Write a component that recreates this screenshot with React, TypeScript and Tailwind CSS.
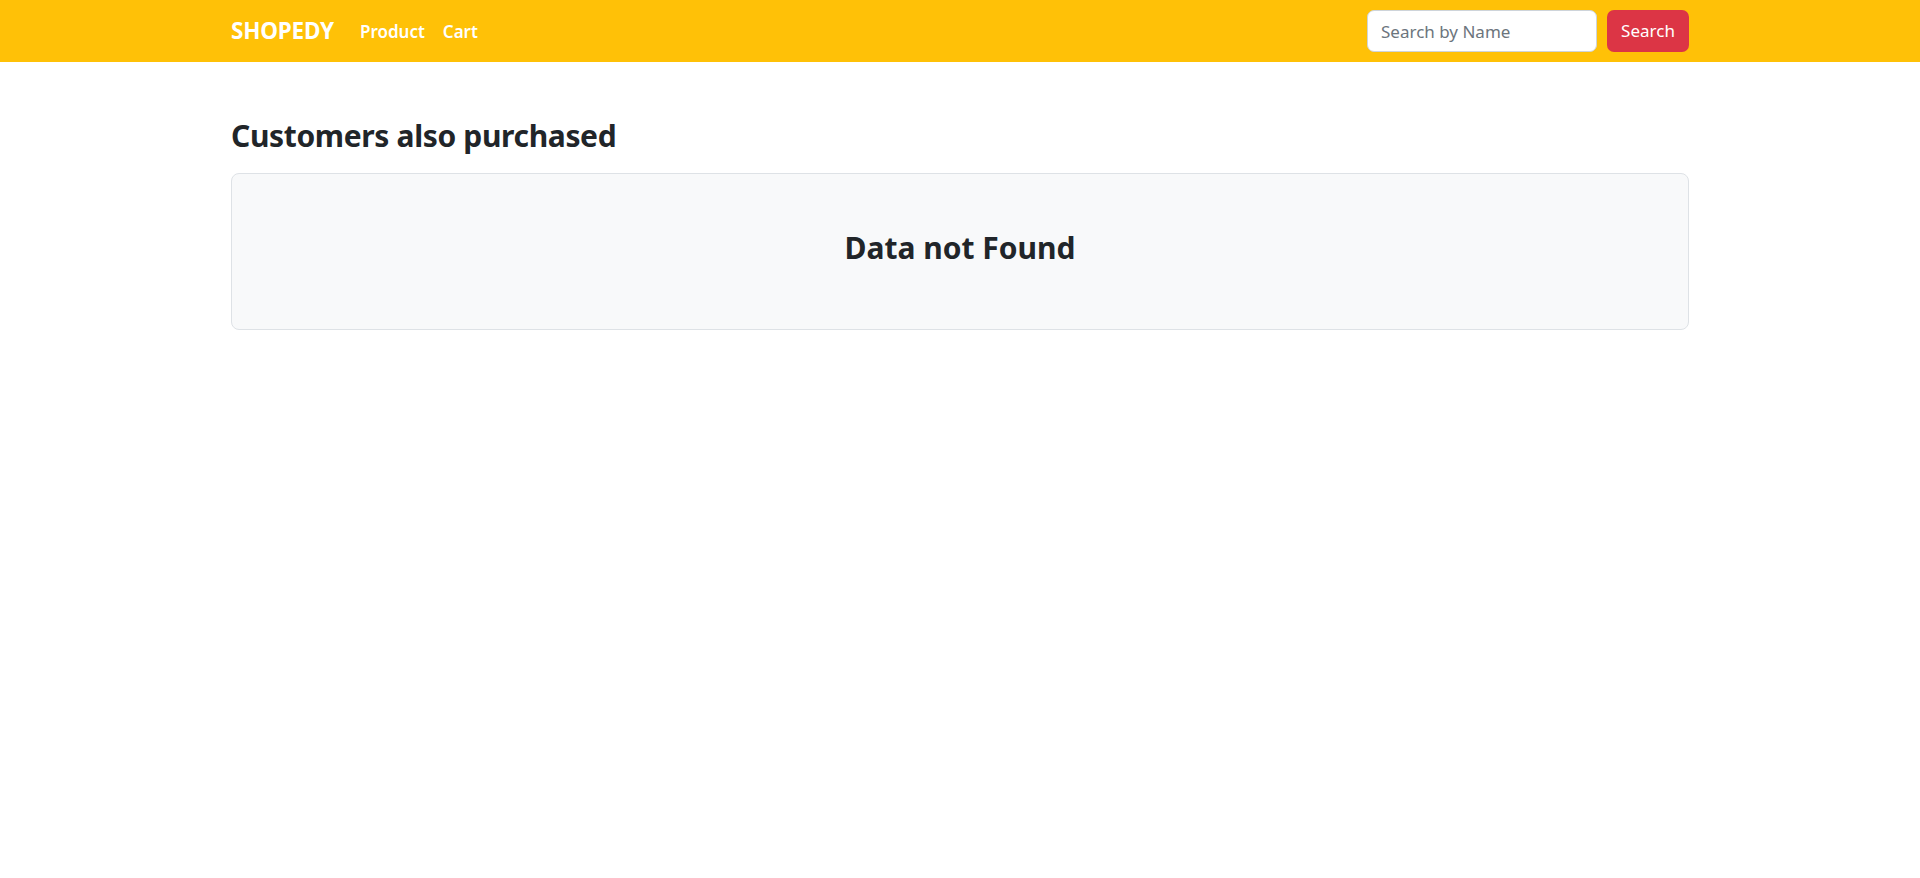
import { useState } from 'react';

export default function App() {
  const [query, setQuery] = useState('');

  return (
    <div className="min-h-screen bg-white text-[#212529] font-['Noto_Sans','Open_Sans',sans-serif]">
      {/* Navbar */}
      <nav className="h-[62px] bg-[#ffc107]">
        <div className="mx-auto flex h-full w-[1458px] items-center">
          <a href="#" className="text-[22.5px] font-bold tracking-[-0.2px] text-white">
            SHOPEDY
          </a>
          <div className="ml-[26px] mt-[1px] flex items-center gap-[18px] text-[17px] font-semibold text-white">
            <a href="#">Product</a>
            <a href="#">Cart</a>
          </div>
          <form className="ml-auto flex items-center gap-[10px]" onSubmit={(e) => e.preventDefault()}>
            <input
              type="text"
              value={query}
              onChange={(e) => setQuery(e.target.value)}
              placeholder="Search by Name"
              className="h-[42px] w-[230px] rounded-[7px] border border-[#ced4da] bg-white px-[13px] text-[17px] text-[#212529] outline-none placeholder:text-[#6c757d]"
            />
            <button
              type="submit"
              className="h-[42px] w-[82px] rounded-[7px] bg-[#dc3545] text-[17px] text-white"
            >
              Search
            </button>
          </form>
        </div>
      </nav>

      {/* Content */}
      <main className="mx-auto w-[1458px] pt-[56px]">
        <h3 className="mb-[19px] text-[30px] font-bold leading-[1.2] tracking-[-0.35px]">
          Customers also purchased
        </h3>
        <div className="flex h-[157px] items-center justify-center rounded-[8px] border border-[#dee2e6] bg-[#f8f9fa] pb-[8px]">
          <h2 className="text-[30px] font-bold leading-[1.2]">Data not Found</h2>
        </div>
      </main>
    </div>
  );
}
